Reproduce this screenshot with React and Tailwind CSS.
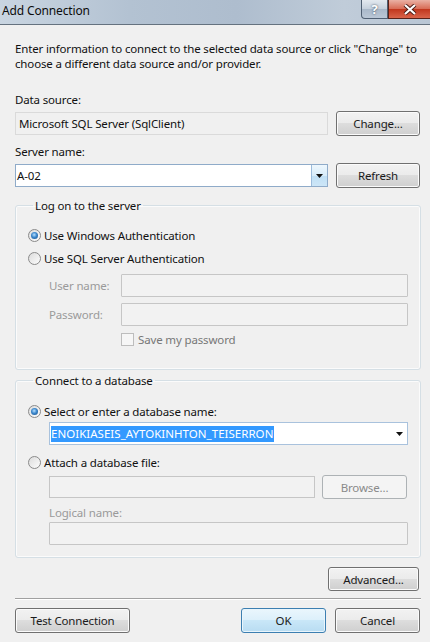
import React from "react";

const btn =
  "flex items-center justify-center rounded-[3px] border border-[#707070] bg-[linear-gradient(#f2f2f2_0%,#ebebeb_49%,#dddddd_50%,#cfcfcf_100%)] shadow-[inset_0_0_0_1px_#fbfbfb] text-[#1b1b1b]";

const disabledBox = "h-[23px] border border-[#c6c6c6] bg-[#f2f2f2] rounded-[1px]";

function Radio({ checked }) {
  return (
    <span className="w-[13px] h-[13px] rounded-full border border-[#8a8a8a] bg-[linear-gradient(135deg,#dcdcdc,#fdfdfd)] flex items-center justify-center shrink-0">
      {checked && (
        <span className="w-[7px] h-[7px] rounded-full bg-[radial-gradient(circle_at_45%_40%,#b7e0ff_0%,#3b87cc_45%,#174d86_100%)]" />
      )}
    </span>
  );
}

function Arrow() {
  return (
    <svg width="7" height="4" viewBox="0 0 7 4">
      <path d="M0 0 H7 L3.5 4 Z" fill="#111" />
    </svg>
  );
}

export default function App() {
  return (
    <div className="w-[430px] h-[642px] bg-[#f0f0f0] flex flex-col overflow-hidden font-['Noto_Sans',sans-serif] text-[11.5px] tracking-[-0.15px] leading-[15px] text-[#111]">
      {/* title bar */}
      <div className="h-[25px] shrink-0 flex items-start justify-between bg-[linear-gradient(90deg,#c9d5e1_0%,#b3c2d2_30%,#aebdce_55%,#c0ccd9_80%,#b9c6d4_100%)] border-b border-[#65727f]">
        <span className="pl-[2px] pt-[3px] text-[12px] text-[#0c0c0c]">Add Connection</span>
        <div className="flex h-[19px]">
          <div className="w-[27px] h-full rounded-bl-[4px] border border-t-0 border-[#4f5f72] bg-[linear-gradient(#e3e9ef_0%,#c5d0dc_50%,#a9b8c9_51%,#bac7d6_100%)] flex items-center justify-center">
            <span className="text-white font-bold text-[13px] leading-[13px] [text-shadow:0_0_2px_#2d3b4c]">?</span>
          </div>
          <div className="w-[42px] h-full border border-t-0 border-r-0 border-[#5a2219] bg-[linear-gradient(#eab1a4_0%,#d86d57_48%,#c1371e_52%,#d9644a_100%)] flex items-center justify-center">
            <svg width="14" height="11" viewBox="0 0 14 11">
              <path d="M2 1 L12 10 M12 1 L2 10" stroke="#4a1c15" strokeWidth="4" />
              <path d="M2 1 L12 10 M12 1 L2 10" stroke="#ffffff" strokeWidth="2.2" />
            </svg>
          </div>
        </div>
      </div>

      <div className="flex flex-col pl-[15px] pr-[9px]">
        <p className="mt-[16px] whitespace-nowrap">
          Enter information to connect to the selected data source or click "Change" to
          <br />
          choose a different data source and/or provider.
        </p>

        <div className="mt-[21px]">Data source:</div>
        <div className="mt-[4px] flex items-center h-[25px]">
          <div className="w-[313px] h-[23px] border border-[#dadada] bg-[#f0f0f0] flex items-center pl-[3px]">
            Microsoft SQL Server (SqlClient)
          </div>
          <button className={`${btn} ml-[8px] w-[84px] h-[25px]`}>Change...</button>
        </div>

        <div className="mt-[8px]">Server name:</div>
        <div className="mt-[4px] flex items-center h-[25px]">
          <div className="w-[313px] h-[23px] border border-[#8fabc9] bg-white flex items-stretch">
            <span className="flex-1 flex items-center pl-[1px]">A-02</span>
            <span className="w-[16px] border-l border-[#9cbcdc] bg-[linear-gradient(#eef7fd_0%,#d7ecfa_50%,#bfdff5_51%,#cde6f7_100%)] flex items-center justify-center">
              <Arrow />
            </span>
          </div>
          <button className={`${btn} ml-[8px] w-[84px] h-[25px]`}>Refresh</button>
        </div>

        <fieldset className="mt-[10px] border border-[#d5dfe5] rounded-[3px] px-[12px] pt-[15px] pb-[22px] shadow-[inset_0_0_0_1px_#fbfbfb]">
          <legend className="ml-[5px] px-[2px]">Log on to the server</legend>
          <div className="flex items-center h-[15px]">
            <Radio checked />
            <span className="ml-[3px]">Use Windows Authentication</span>
          </div>
          <div className="mt-[8px] flex items-center h-[15px]">
            <Radio />
            <span className="ml-[3px]">Use SQL Server Authentication</span>
          </div>
          <div className="mt-[8px] ml-[21px] flex items-center">
            <span className="w-[72px] text-[#9a9a9a]">User name:</span>
            <div className={`${disabledBox} flex-1`} />
          </div>
          <div className="mt-[6px] ml-[21px] flex items-center">
            <span className="w-[72px] text-[#9a9a9a]">Password:</span>
            <div className={`${disabledBox} flex-1`} />
          </div>
          <div className="mt-[6px] ml-[93px] flex items-center h-[15px]">
            <span className="w-[13px] h-[13px] border border-[#bdbdbd] bg-[#f6f6f6]" />
            <span className="ml-[4px] text-[#777]">Save my password</span>
          </div>
        </fieldset>

        <fieldset className="mt-[3px] border border-[#d5dfe5] rounded-[3px] px-[12px] pt-[16px] pb-[12px] shadow-[inset_0_0_0_1px_#fbfbfb]">
          <legend className="ml-[5px] px-[2px]">Connect to a database</legend>
          <div className="flex items-center h-[15px]">
            <Radio checked />
            <span className="ml-[3px]">Select or enter a database name:</span>
          </div>
          <div className="mt-[3px] ml-[21px] h-[23px] border border-[#a9c2dd] bg-white flex items-center pl-[1px] pr-[4px]">
            <span className="bg-[#3399ff] text-white h-[16px] leading-[16px] pr-[1px] tracking-[0.03px]">
              ENOIKIASEIS_AYTOKINHTON_TEISERRON
            </span>
            <span className="ml-auto flex items-center">
              <Arrow />
            </span>
          </div>
          <div className="mt-[10px] flex items-center h-[15px]">
            <Radio />
            <span className="ml-[3px]">Attach a database file:</span>
          </div>
          <div className="mt-[5px] ml-[21px] flex items-center h-[24px]">
            <div className="w-[266px] h-[22px] border border-[#c6c6c6] bg-[#f2f2f2]" />
            <button className="ml-[7px] w-[85px] h-[24px] rounded-[3px] border border-[#adb2b5] bg-[#f4f4f4] text-[#8a8a8a] flex items-center justify-center">
              Browse...
            </button>
          </div>
          <div className="mt-[6px] ml-[21px] text-[#9a9a9a]">Logical name:</div>
          <div className={`${disabledBox} mt-[2px] ml-[21px]`} />
        </fieldset>

        <div className="mt-[9px] flex justify-end pr-[2px]">
          <button className={`${btn} w-[91px] h-[24px]`}>Advanced...</button>
        </div>

        <div className="mt-[7px] h-px bg-[#a0a0a0] shadow-[0_1px_0_#ffffff]" />

        <div className="mt-[9px] flex items-center pr-[1px]">
          <button className={`${btn} w-[115px] h-[25px]`}>Test Connection</button>
          <button className="ml-auto w-[85px] h-[25px] rounded-[3px] border border-[#3c7fb1] bg-[linear-gradient(#eaf6fd_0%,#dcf0fb_49%,#c9e7f8_50%,#b8dcf2_100%)] shadow-[inset_0_0_0_1px_#e9f5fc] flex items-center justify-center text-[#1b1b1b]">
            OK
          </button>
          <button className={`${btn} ml-[9px] w-[85px] h-[25px]`}>Cancel</button>
        </div>
      </div>
    </div>
  );
}
